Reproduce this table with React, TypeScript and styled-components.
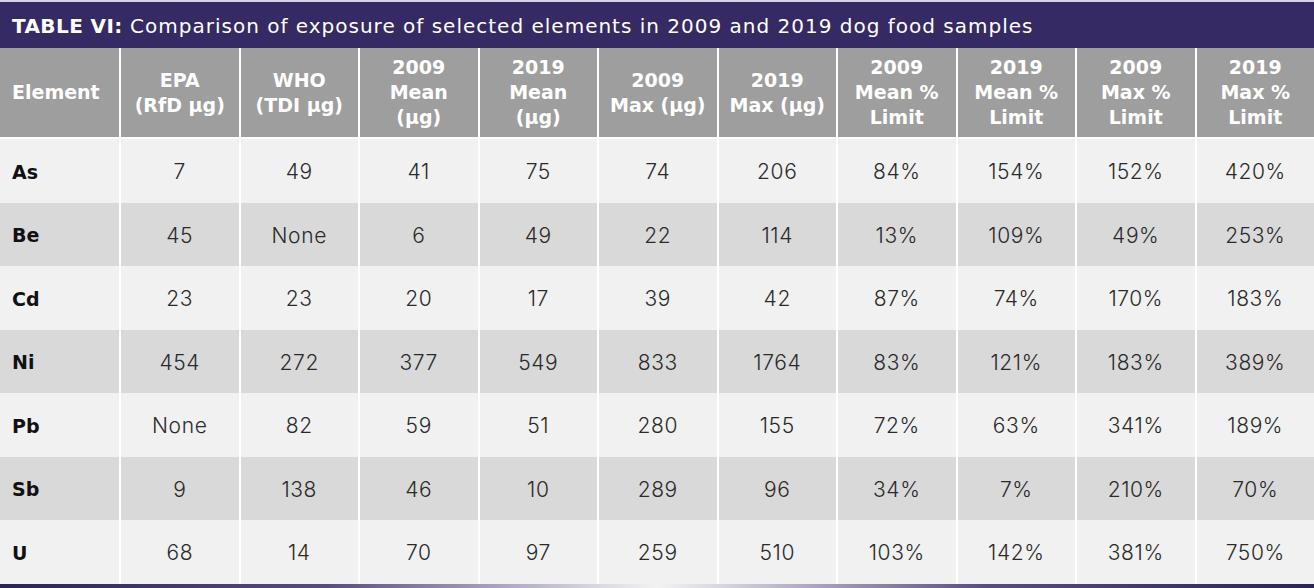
import styled, { createGlobalStyle } from "styled-components";

const GlobalStyle = createGlobalStyle`
  html, body {
    margin: 0;
    padding: 0;
    background: #ffffff;
  }
  * {
    box-sizing: border-box;
  }
`;

const headers = [
  ["Element"],
  ["EPA", "(RfD µg)"],
  ["WHO", "(TDI µg)"],
  ["2009", "Mean", "(µg)"],
  ["2019", "Mean", "(µg)"],
  ["2009", "Max (µg)"],
  ["2019", "Max (µg)"],
  ["2009", "Mean %", "Limit"],
  ["2019", "Mean %", "Limit"],
  ["2009", "Max %", "Limit"],
  ["2019", "Max %", "Limit"],
];

const rows = [
  ["As", "7", "49", "41", "75", "74", "206", "84%", "154%", "152%", "420%"],
  ["Be", "45", "None", "6", "49", "22", "114", "13%", "109%", "49%", "253%"],
  ["Cd", "23", "23", "20", "17", "39", "42", "87%", "74%", "170%", "183%"],
  ["Ni", "454", "272", "377", "549", "833", "1764", "83%", "121%", "183%", "389%"],
  ["Pb", "None", "82", "59", "51", "280", "155", "72%", "63%", "341%", "189%"],
  ["Sb", "9", "138", "46", "10", "289", "96", "34%", "7%", "210%", "70%"],
  ["U", "68", "14", "70", "97", "259", "510", "103%", "142%", "381%", "750%"],
];

export default function App() {
  return (
    <>
      <GlobalStyle />
      <Wrapper>
        <Title>
          <strong>TABLE VI:</strong> Comparison of exposure of selected elements in 2009 and 2019 dog food samples
        </Title>
        <HeadRow>
          {headers.map((lines, i) => (
            <HeadCell key={i} $first={i === 0}>
              {lines.map((l, j) => (
                <span key={j}>{l}</span>
              ))}
            </HeadCell>
          ))}
        </HeadRow>
        {rows.map((row, r) => (
          <BodyRow key={row[0]} $shade={r % 2 === 1}>
            {row.map((v, i) =>
              i === 0 ? (
                <LabelCell key={i}>{v}</LabelCell>
              ) : (
                <Cell key={i}>{v}</Cell>
              )
            )}
          </BodyRow>
        ))}
        <BottomBar />
      </Wrapper>
    </>
  );
}

const Wrapper = styled.div`
  width: 1314px;
  border-top: 2px solid #d6d4de;
  font-family: Inter, "Liberation Sans", sans-serif;
`;

const Title = styled.div`
  height: 46px;
  padding: 1px 12px 0;
  display: flex;
  align-items: center;
  background-color: #352a63;
  color: #ffffff;
  font-family: "DejaVu Sans", sans-serif;
  font-size: 20px;
  font-weight: 400;
  letter-spacing: 1px;
  white-space: pre;

  strong {
    font-weight: 700;
    letter-spacing: 0.4px;
  }
`;

const Grid = styled.div`
  display: grid;
  grid-template-columns: 119px repeat(10, 1fr);
`;

const HeadRow = styled(Grid)`
  height: 91px;
  border-bottom: 2px solid #ffffff;
`;

const HeadCell = styled.div<{ $first?: boolean }>`
  display: flex;
  flex-direction: column;
  justify-content: center;
  align-items: ${(p) => (p.$first ? "flex-start" : "center")};
  padding-left: ${(p) => (p.$first ? "12px" : "0")};
  background-color: #9e9e9e;
  border-left: ${(p) => (p.$first ? "none" : "2px solid #ffffff")};
  color: #ffffff;
  font-family: "DejaVu Sans", sans-serif;
  font-size: 19px;
  font-weight: 700;
  line-height: 25px;
  text-align: center;
  white-space: nowrap;
`;

const BodyRow = styled(Grid)<{ $shade: boolean }>`
  height: 63.5px;
  background-color: ${(p) => (p.$shade ? "#d9d9d9" : "#f1f1f1")};
`;

const Cell = styled.div`
  display: flex;
  align-items: center;
  justify-content: center;
  padding-top: 2px;
  border-left: 2px solid #ffffff;
  color: #2a2a2a;
  font-size: 21px;
  font-weight: 300;
  letter-spacing: 0.6px;
`;

const LabelCell = styled.div`
  display: flex;
  align-items: center;
  padding: 2px 0 0 12px;
  color: #111111;
  font-family: "DejaVu Sans", sans-serif;
  font-size: 19px;
  font-weight: 700;
`;

const BottomBar = styled.div`
  height: 6px;
  background: linear-gradient(
    90deg,
    #2c2358 0%,
    #5a4c80 25%,
    #d8d4e0 45%,
    #f2f2f2 50%,
    #d8d4e0 55%,
    #5a4c80 75%,
    #2c2358 100%
  );
`;
